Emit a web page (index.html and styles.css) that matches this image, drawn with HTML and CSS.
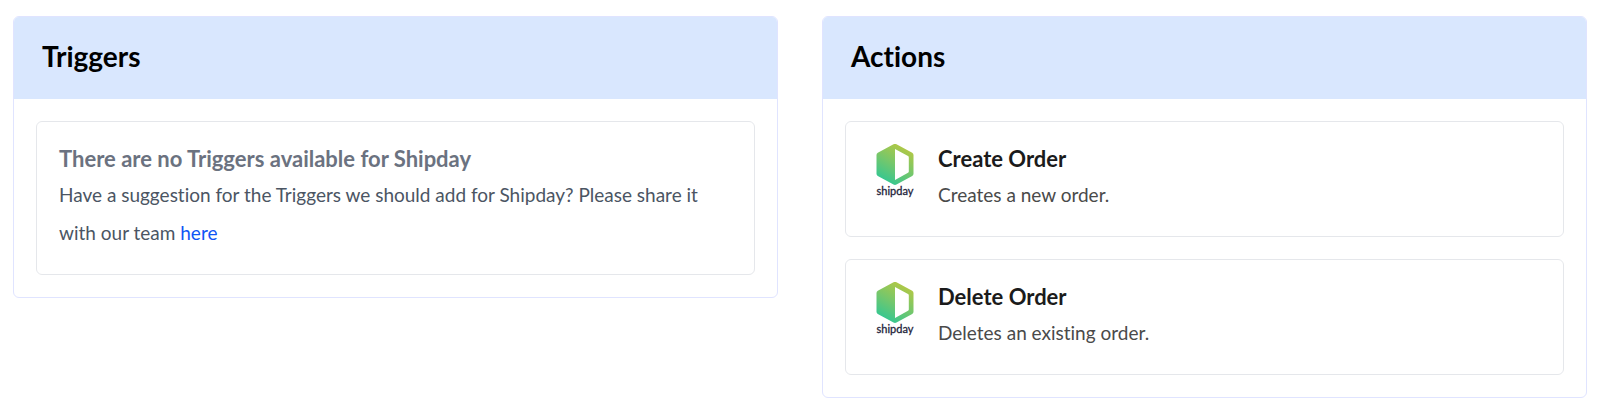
FILE: index.html
```html
<!DOCTYPE html>
<html lang="en">
<head>
    <meta charset="UTF-8">
    <meta name="viewport" content="width=device-width, initial-scale=1.0">
    <title>Shipday Triggers and Actions</title>
    <link rel="stylesheet" href="styles.css">
</head>
<body>
    <div class="container">
        <section class="panel">
            <h2 class="panel-title">Triggers</h2>
            <div class="panel-body">
                <div class="card empty">
                    <div class="card-text">
                        <h3>There are no Triggers available for Shipday</h3>
                        <p>Have a suggestion for the Triggers we should add for Shipday? Please share it with our team <a href="#">here</a></p>
                    </div>
                </div>
            </div>
        </section>

        <section class="panel">
            <h2 class="panel-title">Actions</h2>
            <div class="panel-body">
                <div class="card">
                    <svg class="logo" viewBox="0 0 54 56">
                        <defs>
                            <linearGradient id="logoFill" x1="0.75" y1="0" x2="0.25" y2="1">
                                <stop offset="0" stop-color="#b9c840"/>
                                <stop offset="0.5" stop-color="#76c76b"/>
                                <stop offset="1" stop-color="#2cc796"/>
                            </linearGradient>
                        </defs>
                        <path fill="url(#logoFill)" fill-rule="evenodd" d="M25.500 0.300Q27 -0.500 28.500 0.300L44.200 8.700Q45.500 9.400 45.500 10.900V29.700Q45.500 31.200 44.200 31.900L28.500 40.500Q27 41.300 25.500 40.500L9.800 31.900Q8.500 31.200 8.500 29.700V10.900Q8.500 9.400 9.800 8.700ZM27 5V36L40 28.800Q40.800 28.300 40.800 27.400V13.400Q40.800 12.500 40 12Z"/>
                        <text x="27" y="51" text-anchor="middle" class="logo-text">shipday</text>
                    </svg>
                    <div class="card-text">
                        <h3>Create Order</h3>
                        <p>Creates a new order.</p>
                    </div>
                </div>
                <div class="card">
                    <svg class="logo" viewBox="0 0 54 56">
                        <path fill="url(#logoFill)" fill-rule="evenodd" d="M25.500 0.300Q27 -0.500 28.500 0.300L44.200 8.700Q45.500 9.400 45.500 10.900V29.700Q45.500 31.200 44.200 31.900L28.500 40.500Q27 41.300 25.500 40.500L9.800 31.900Q8.500 31.200 8.500 29.700V10.900Q8.500 9.400 9.800 8.700ZM27 5V36L40 28.800Q40.800 28.300 40.800 27.400V13.400Q40.800 12.500 40 12Z"/>
                        <text x="27" y="51" text-anchor="middle" class="logo-text">shipday</text>
                    </svg>
                    <div class="card-text">
                        <h3>Delete Order</h3>
                        <p>Deletes an existing order.</p>
                    </div>
                </div>
            </div>
        </section>
    </div>
</body>
</html>
```

FILE: styles.css
```css
* {
    box-sizing: border-box;
}
body {
    margin: 0;
    font-family: Lato, "Open Sans", sans-serif;
    font-variant-ligatures: none;
    background-color: #fff;
}
h2, h3, p {
    margin: 0;
}
.container {
    display: grid;
    grid-template-columns: 1fr 1fr;
    align-items: start;
    gap: 44px;
    padding: 16px 13px;
}
.panel {
    border: 1px solid #e0e4ff;
    border-radius: 6px;
    overflow: hidden;
}
.panel-title {
    padding: 22px 28px 26px;
    font-size: 28px;
    line-height: 34px;
    font-weight: 700;
    color: #000;
    background-color: #d9e7fe;
}
.panel-body {
    display: flex;
    flex-direction: column;
    gap: 22px;
    padding: 22px;
}
.card {
    display: flex;
    gap: 16px;
    padding: 22px;
    border: 1px solid #e5e7eb;
    border-radius: 6px;
}
.card-text {
    flex: 1;
}
.card h3 {
    margin-bottom: 2px;
    font-size: 22px;
    line-height: 30px;
    font-weight: 700;
    color: #1b1b1b;
}
.card p {
    font-size: 19px;
    line-height: 38px;
    color: #4a4a4a;
}
.card.empty h3 {
    color: #6b7280;
}
.card.empty p {
    color: #4b5563;
}
.card a {
    color: #0f55f5;
    text-decoration: none;
}
.logo {
    flex: none;
    width: 54px;
    height: 56px;
}
.logo-text {
    font-size: 11px;
    font-weight: 400;
    fill: #23233a;
    stroke: #23233a;
    stroke-width: 0.3px;
}
```
